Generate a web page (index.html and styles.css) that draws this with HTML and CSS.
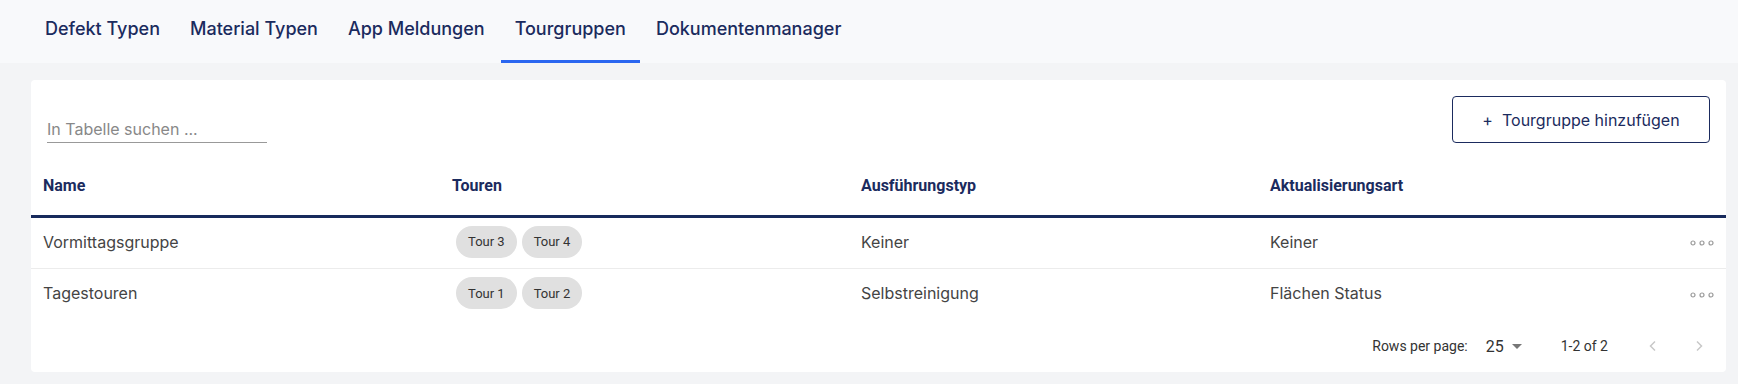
FILE: index.html
```html
<!DOCTYPE html>
<html lang="de">
<head>
    <meta charset="UTF-8">
    <meta name="viewport" content="width=device-width, initial-scale=1.0">
    <title>Tourgruppen</title>
    <link rel="stylesheet" href="styles.css">
</head>
<body>
    <!-- Reiter -->
    <nav class="tabs">
        <a class="tab">Defekt Typen</a>
        <a class="tab">Material Typen</a>
        <a class="tab">App Meldungen</a>
        <a class="tab active">Tourgruppen</a>
        <a class="tab">Dokumentenmanager</a>
    </nav>

    <div class="card">
        <div class="toolbar">
            <input class="search" type="text" placeholder="In Tabelle suchen ...">
            <button class="add-button"><span class="plus">+</span>Tourgruppe hinzufügen</button>
        </div>

        <table class="data-table">
            <colgroup>
                <col class="col">
                <col class="col">
                <col class="col">
                <col class="col">
                <col>
            </colgroup>
            <thead>
                <tr>
                    <th>Name</th>
                    <th>Touren</th>
                    <th>Ausführungstyp</th>
                    <th>Aktualisierungsart</th>
                    <th></th>
                </tr>
            </thead>
            <tbody>
                <tr>
                    <td>Vormittagsgruppe</td>
                    <td><div class="chips"><span class="chip">Tour 3</span><span class="chip">Tour 4</span></div></td>
                    <td>Keiner</td>
                    <td>Keiner</td>
                    <td class="actions">
                        <svg width="24" height="6" viewBox="0 0 24 6"><circle cx="3" cy="3" r="2" /><circle cx="12" cy="3" r="2" /><circle cx="21" cy="3" r="2" /></svg>
                    </td>
                </tr>
                <tr>
                    <td>Tagestouren</td>
                    <td><div class="chips"><span class="chip">Tour 1</span><span class="chip">Tour 2</span></div></td>
                    <td>Selbstreinigung</td>
                    <td>Flächen Status</td>
                    <td class="actions">
                        <svg width="24" height="6" viewBox="0 0 24 6"><circle cx="3" cy="3" r="2" /><circle cx="12" cy="3" r="2" /><circle cx="21" cy="3" r="2" /></svg>
                    </td>
                </tr>
            </tbody>
        </table>

        <div class="pagination">
            <span class="rows-label">Rows per page:</span>
            <span class="rows-select">25
                <svg width="24" height="24" viewBox="0 0 24 24"><path d="M7 10l5 5 5-5z" /></svg>
            </span>
            <span class="page-info">1-2 of 2</span>
            <span class="page-nav">
                <svg width="24" height="24" viewBox="0 0 24 24"><polyline points="15,7.5 10.5,12 15,16.5" /></svg>
                <svg width="24" height="24" viewBox="0 0 24 24"><polyline points="9,7.5 13.5,12 9,16.5" /></svg>
            </span>
        </div>
    </div>
</body>
</html>
```

FILE: styles.css
```css
* {
    margin: 0;
    padding: 0;
    box-sizing: border-box;
}

body {
    background-color: #f3f4f6;
    font-family: Inter, "Noto Sans", sans-serif;
    color: #444;
    padding: 0 12px 12px 31px;
}

.tabs {
    display: flex;
    height: 63px;
    margin: 0 -12px 17px -31px;
    padding-left: 31px;
    background-color: #f8f9fb;
}

.tab {
    display: flex;
    align-items: center;
    padding: 0 14px 3px 14px;
    font-size: 18px;
    font-weight: 500;
    color: #1b2b5e;
    border-bottom: 3px solid transparent;
    margin-right: 2px;
}

.tab.active {
    border-bottom-color: #2a66f0;
}

.card {
    background-color: #fff;
    border-radius: 4px;
}

.toolbar {
    display: flex;
    justify-content: space-between;
    align-items: flex-end;
    height: 80px;
    padding: 16px 16px 17px 16px;
}

.search {
    width: 220px;
    height: 30px;
    border: none;
    border-bottom: 1px solid #999;
    font-family: Inter, sans-serif;
    font-size: 16px;
    color: #444;
    outline: none;
    padding-top: 2px;
}

.search::placeholder {
    color: #888;
}

.add-button {
    width: 258px;
    height: 47px;
    background: #fff;
    border: 1px solid #1b2b5e;
    border-radius: 4px;
    color: #1b2b5e;
    font-family: Inter, sans-serif;
    font-size: 16px;
}

.plus {
    margin-right: 9px;
}

.data-table {
    width: 100%;
    border-collapse: collapse;
    table-layout: fixed;
}

.col {
    width: 409px;
}

.data-table th {
    height: 56px;
    padding: 0 12px 3px 12px;
    text-align: left;
    font-family: Roboto, sans-serif;
    font-weight: 700;
    font-size: 16px;
    color: #1b2b5e;
    border-bottom: 3px solid #172a5c;
}

.data-table td {
    height: 52px;
    padding: 0 12px 2px 12px;
    font-size: 16px;
    color: #444;
    border-bottom: 1px solid #ececec;
}

.data-table tbody tr:last-child td {
    border-bottom: none;
}

.chips {
    display: flex;
    gap: 5px;
    margin-left: 4px;
}

.chip {
    display: inline-flex;
    align-items: center;
    height: 32px;
    padding: 0 12px;
    border-radius: 16px;
    background-color: #e0e0e0;
    font-family: Roboto, sans-serif;
    font-size: 13px;
    color: #333;
}

.actions {
    text-align: right;
}

.actions svg {
    display: inline-block;
    vertical-align: middle;
}

.actions circle {
    fill: none;
    stroke: #9a9a9a;
    stroke-width: 1.2;
}

.pagination {
    display: flex;
    justify-content: flex-end;
    align-items: center;
    height: 52px;
    padding-right: 14px;
    font-family: Roboto, sans-serif;
    font-size: 14px;
    color: #333;
}

.rows-select {
    display: flex;
    align-items: center;
    margin-left: 18px;
    font-size: 16px;
}

.rows-select svg {
    fill: #777;
    margin-left: 1px;
}

.page-info {
    margin-left: 32px;
}

.page-nav {
    display: flex;
    gap: 24px;
    margin-left: 32px;
}

.page-nav polyline {
    fill: none;
    stroke: #c8c8c8;
    stroke-width: 1.5;
}
```
